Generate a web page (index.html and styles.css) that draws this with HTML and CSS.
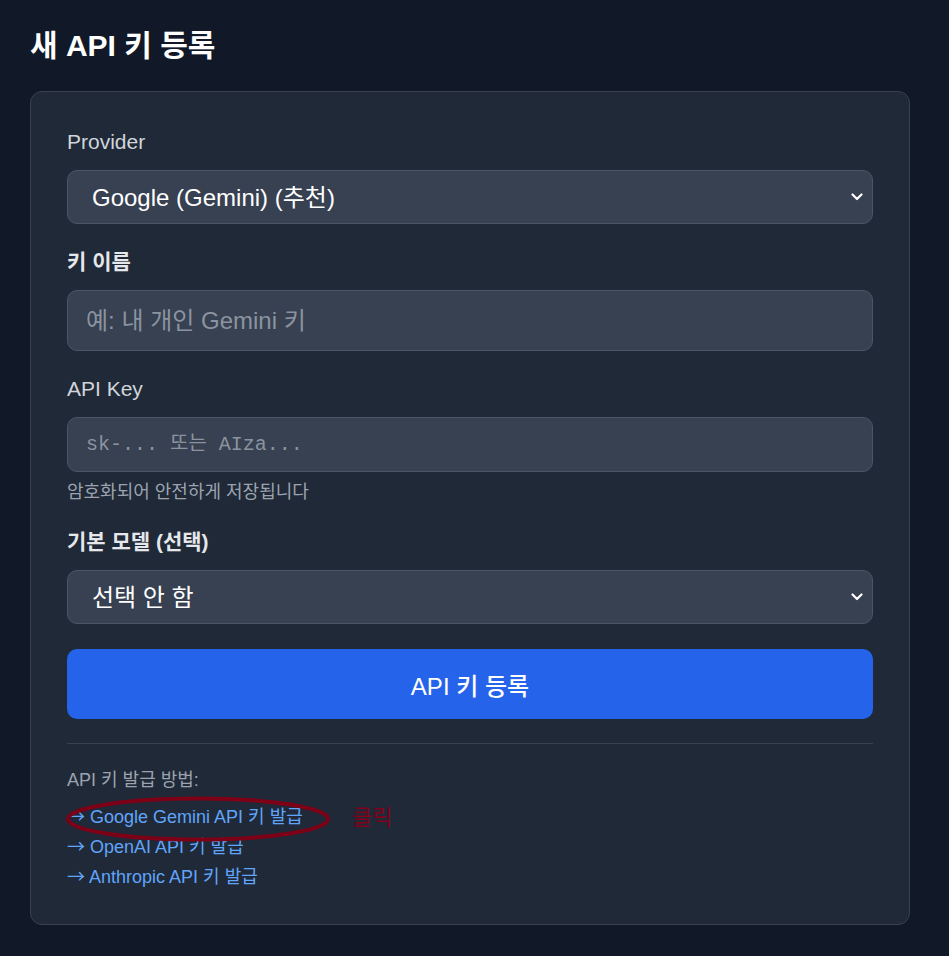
FILE: index.html
```html
<!DOCTYPE html>
<html lang="ko">
<head>
<meta charset="utf-8">
<title>새 API 키 등록</title>
<link rel="stylesheet" href="styles.css">
</head>
<body>
<main class="page">
  <h1 class="title">새 API 키 등록</h1>
  <form class="card">
    <div class="group">
      <label class="label">Provider</label>
      <div class="select-wrap">
        <select class="select">
          <option>Google (Gemini) (추천)</option>
          <option>OpenAI</option>
          <option>Anthropic</option>
        </select>
        <svg class="chevron" width="12" height="8" viewBox="0 0 12 8"><path d="M1.5 1.5 L6 6 L10.5 1.5" fill="none" stroke="#fff" stroke-width="2.2" stroke-linecap="round" stroke-linejoin="round"/></svg>
      </div>
    </div>
    <div class="group">
      <label class="label bold">키 이름</label>
      <input class="input name-input" type="text" placeholder="예: 내 개인 Gemini 키">
    </div>
    <div class="group">
      <label class="label">API Key</label>
      <input class="input key-input" type="text" placeholder="sk-... 또는 AIza...">
      <p class="help">암호화되어 안전하게 저장됩니다</p>
    </div>
    <div class="group">
      <label class="label bold">기본 모델 (선택)</label>
      <div class="select-wrap">
        <select class="select">
          <option>선택 안 함</option>
        </select>
        <svg class="chevron" width="12" height="8" viewBox="0 0 12 8"><path d="M1.5 1.5 L6 6 L10.5 1.5" fill="none" stroke="#fff" stroke-width="2.2" stroke-linecap="round" stroke-linejoin="round"/></svg>
      </div>
    </div>
    <button class="submit" type="button">API 키 등록</button>
    <div class="guide">
      <p class="guide-title">API 키 발급 방법:</p>
      <div class="links">
        <a class="link" href="#"><span class="arrow">→</span> Google Gemini API 키 발급</a>
        <a class="link" href="#"><span class="arrow">→</span> OpenAI API 키 발급</a>
        <a class="link" href="#"><span class="arrow">→</span> Anthropic API 키 발급</a>
        <svg class="circle" width="270" height="50" viewBox="0 0 270 50"><ellipse cx="133" cy="24" rx="130" ry="20.5" fill="none" stroke="#7d0017" stroke-width="4"/></svg>
        <span class="note">클릭</span>
      </div>
    </div>
  </form>
</main>
</body>
</html>
```
FILE: styles.css
```css
* { box-sizing: border-box; }

html, body {
  margin: 0;
  padding: 0;
  background: #111827;
}

body {
  font-family: "Liberation Sans", "Noto Sans CJK KR", Arial, sans-serif;
  color: #f3f4f6;
}

.page {
  width: 880px;
  margin-left: 30px;
  padding-top: 28px;
  padding-bottom: 30px;
}

.title {
  margin: 0 0 27px;
  font-size: 30px;
  line-height: 36px;
  font-weight: 700;
  color: #ffffff;
}

.card {
  background: #1f2937;
  border: 1px solid #374151;
  border-radius: 12px;
  padding: 36px 36px 32px;
  display: flex;
  flex-direction: column;
}

.group {
  display: flex;
  flex-direction: column;
  margin-bottom: 24px;
}

.label {
  display: block;
  font-size: 21px;
  line-height: 28px;
  color: #d1d5db;
  margin-bottom: 14px;
}

.label.bold {
  font-weight: 700;
  color: #e5e7eb;
}

.select-wrap {
  position: relative;
}

.select {
  appearance: none;
  -webkit-appearance: none;
  width: 100%;
  height: 54px;
  background: #374151;
  border: 1px solid #4b5563;
  border-radius: 10px;
  color: #ffffff;
  font-family: inherit;
  font-size: 24px;
  padding: 0 40px 0 24px;
  outline: none;
}

.chevron {
  position: absolute;
  right: 10px;
  top: 23px;
  pointer-events: none;
}

.input {
  width: 100%;
  background: #374151;
  border: 1px solid #4b5563;
  border-radius: 10px;
  color: #ffffff;
  outline: none;
}

.name-input {
  height: 61px;
  font-family: inherit;
  font-size: 24px;
  padding: 0 18px;
}

.key-input {
  height: 55px;
  font-family: "Liberation Mono", "Noto Sans CJK KR", monospace;
  font-size: 20px;
  padding: 0 18px;
}

.input::placeholder {
  color: #8b93a0;
  opacity: 1;
}

.help {
  margin: 8px 0 0;
  font-size: 18px;
  line-height: 24px;
  color: #9ca3af;
}

.submit {
  height: 70px;
  margin-top: 1px;
  border: none;
  border-radius: 10px;
  background: #2563eb;
  color: #ffffff;
  font-family: "Liberation Sans", "Noto Sans CJK KR", sans-serif;
  font-size: 24px;
  font-weight: 500;
}

.guide {
  margin-top: 24px;
  border-top: 1px solid #374151;
  padding-top: 24px;
}

.guide-title {
  margin: 0 0 10px;
  font-size: 18px;
  line-height: 24px;
  color: #9ca3af;
}

.links {
  position: relative;
  display: flex;
  flex-direction: column;
  align-items: flex-start;
}

.link {
  font-size: 18px;
  line-height: 30px;
  color: #60a5fa;
  text-decoration: none;
}

.arrow {
  font-family: "Noto Sans CJK KR", sans-serif;
  font-size: 18px;
  line-height: 1;
}

.circle {
  position: absolute;
  left: -2px;
  top: -7px;
  pointer-events: none;
}

.note {
  position: absolute;
  left: 285px;
  top: 1px;
  font-size: 22px;
  line-height: 30px;
  color: #820019;
}
```
